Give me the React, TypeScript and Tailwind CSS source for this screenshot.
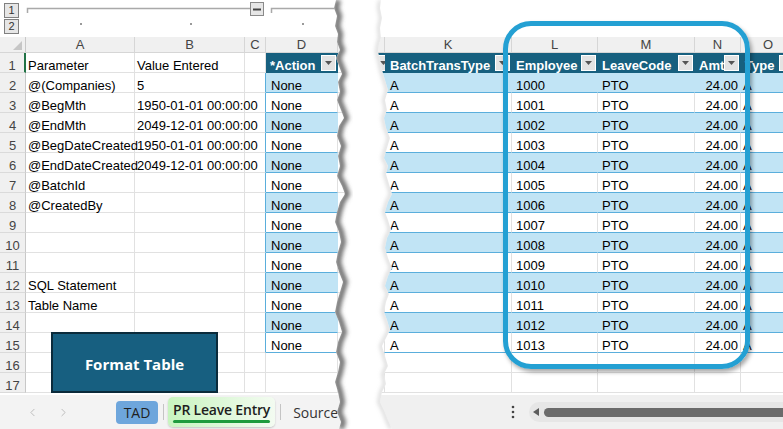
import React from 'react';
import { ChevronLeft, ChevronRight } from 'lucide-react';

const params = [
  'Parameter', '@(Companies)', '@BegMth', '@EndMth', '@BegDateCreated', '@EndDateCreated',
  '@BatchId', '@CreatedBy', '', '', '', 'SQL Statement', 'Table Name', '', '', '', '',
];
const values = [
  'Value Entered', '5', '1950-01-01 00:00:00', '2049-12-01 00:00:00', '1950-01-01 00:00:00',
  '2049-12-01 00:00:00', '', '', '', '', '', '', '', '', '', '', '',
];
const rows = Array.from({ length: 17 }, (_, i) => i + 1);

function FilterBtn() {
  return (
    <span className="mr-[2px] ml-auto flex h-[16px] w-[15px] shrink-0 items-center justify-center self-center border border-white bg-[#e3e3e3]">
      <svg width="7" height="4" viewBox="0 0 7 4">
        <polygon points="0,0 7,0 3.5,4" fill="#555" />
      </svg>
    </span>
  );
}

function Cell({ className = '', children }: { className?: string; children?: React.ReactNode }) {
  return (
    <div className={`flex h-full shrink-0 items-end whitespace-nowrap border-r border-b leading-[13px] ${className}`}>
      {children}
    </div>
  );
}

function HeadCell({ className = '', children }: { className?: string; children?: React.ReactNode }) {
  return (
    <div className={`flex h-full shrink-0 items-end whitespace-nowrap bg-[#17607f] pb-[1px] pl-[4px] font-bold leading-[13px] text-white ${className}`}>
      {children}
      <FilterBtn />
    </div>
  );
}

function Letter({ className = '', children }: { className?: string; children?: React.ReactNode }) {
  return (
    <div className={`flex h-full shrink-0 items-center justify-center border-r border-r-[#d6d6d6] text-[#444] ${className}`}>
      {children}
    </div>
  );
}

function LeftRow({ r }: { r: number }) {
  const inTable = r >= 2 && r <= 15;
  const stripe = inTable && r % 2 === 0;
  return (
    <div className="flex h-[20px] shrink-0">
      <div
        className={`flex w-[26px] shrink-0 items-end justify-center border-b border-b-[#dadada] bg-[#f0f0f0] leading-[13px] text-[#444] ${
          r === 1 ? 'border-r-2 border-r-[#217346]' : 'border-r border-r-[#c8c8c8]'
        }`}
      >
        {r}
      </div>
      <Cell className="w-[109px] border-r-[#e1e1e1] border-b-[#e1e1e1] pl-[2px]">{params[r - 1]}</Cell>
      <Cell className="w-[110px] border-r-[#e1e1e1] border-b-[#e1e1e1] pl-[2px]">{values[r - 1]}</Cell>
      <Cell className={`w-[21px] border-b-[#e1e1e1] ${inTable ? 'border-r-[#5aaedc]' : 'border-r-[#e1e1e1]'}`} />
      {r === 1 ? (
        <HeadCell className="w-[72px]">*Action</HeadCell>
      ) : inTable ? (
        <Cell
          className={`w-[72px] border-b-[#5aaedc] pl-[5px] ${
            stripe ? 'border-r-[#c1e4f5] bg-[#c1e4f5]' : 'border-r-[#e1e1e1] bg-white'
          }`}
        >
          None
        </Cell>
      ) : (
        <Cell className="w-[72px] border-r-[#e1e1e1] border-b-[#e1e1e1]" />
      )}
      <Cell className="w-[7px] border-r-[#e1e1e1] border-b-[#e1e1e1]" />
    </div>
  );
}

function RightRow({ r }: { r: number }) {
  const inTable = r >= 2 && r <= 15;
  const stripe = inTable && r % 2 === 0;
  if (r === 1) {
    return (
      <div className="flex h-[20px] shrink-0">
        <HeadCell className="w-[13px] pl-0" />
        <HeadCell className="w-[127px] pl-[5px]">BatchTransType</HeadCell>
        <HeadCell className="w-[86px] pl-[3px]">Employee</HeadCell>
        <HeadCell className="w-[97px]">LeaveCode</HeadCell>
        <HeadCell className="w-[46px] pl-[3px]">Amt</HeadCell>
        <HeadCell className="w-[55px] pl-[3px]">Type</HeadCell>
      </div>
    );
  }
  if (!inTable) {
    const g = 'border-r-[#e1e1e1] border-b-[#e1e1e1]';
    return (
      <div className="flex h-[20px] shrink-0">
        <Cell className={`w-[13px] ${g}`} />
        <Cell className={`w-[127px] ${g}`} />
        <Cell className={`w-[86px] ${g}`} />
        <Cell className={`w-[97px] ${g}`} />
        <Cell className={`w-[46px] ${g}`} />
        <Cell className={`w-[55px] ${g}`} />
      </div>
    );
  }
  const t = `border-b-[#5aaedc] ${stripe ? 'border-r-[#c1e4f5] bg-[#c1e4f5]' : 'border-r-[#e1e1e1] bg-white'}`;
  return (
    <div className="flex h-[20px] shrink-0">
      <Cell className={`w-[13px] ${t}`} />
      <Cell className={`w-[127px] pl-[5px] ${t}`}>A</Cell>
      <Cell className={`w-[86px] pl-[4px] ${t}`}>{1000 + r - 2}</Cell>
      <Cell className={`w-[97px] pl-[4px] ${t}`}>PTO</Cell>
      <Cell className={`w-[46px] justify-end pr-[2px] ${t}`}>24.00</Cell>
      <Cell className={`w-[55px] pl-[2px] ${t}`}>A</Cell>
    </div>
  );
}

function LeftPane() {
  return (
    <div className="flex w-[345px] shrink-0 flex-col overflow-hidden">
      <div className="flex h-[37px] shrink-0">
        <div className="ml-[4px] mt-[3px] flex flex-col gap-[1px] text-[11px] leading-none text-[#333]">
          <span className="flex h-[15px] w-[15px] items-center justify-center border border-[#808080] bg-[#e6e6e6]">1</span>
          <span className="flex h-[15px] w-[15px] items-center justify-center border border-[#808080] bg-[#e6e6e6]">2</span>
        </div>
        <svg className="ml-[7px] shrink-0" width="319" height="37" viewBox="26 0 319 37">
          <path d="M27.5 13 V8.5 H250" stroke="#a9a9a9" strokeWidth="1.5" fill="none" />
          <rect x="250.5" y="2.5" width="13" height="13" fill="#e6e6e6" stroke="#8a8a8a" />
          <path d="M253 9.5 H261" stroke="#444" strokeWidth="2" />
          <path d="M271.5 13 V8.5 H345" stroke="#a9a9a9" strokeWidth="1.5" fill="none" />
          <rect x="80" y="23" width="2" height="2" fill="#9a9a9a" />
          <rect x="190" y="23" width="2" height="2" fill="#9a9a9a" />
          <rect x="302" y="23" width="2" height="2" fill="#9a9a9a" />
        </svg>
      </div>
      <div className="flex h-[16px] shrink-0 border-b border-b-[#d6d6d6] bg-[#f0f0f0]">
        <div className="flex h-full w-[26px] shrink-0 items-end justify-end border-r border-r-[#c8c8c8] pr-[3px] pb-[2px]">
          <svg width="9" height="9" viewBox="0 0 9 9">
            <polygon points="9,0 9,9 0,9" fill="#c6c6c6" />
          </svg>
        </div>
        <Letter className="w-[109px]">A</Letter>
        <Letter className="w-[110px]">B</Letter>
        <Letter className="w-[21px]">C</Letter>
        <Letter className="w-[72px]">D</Letter>
        <Letter className="w-[7px]" />
      </div>
      {rows.map((r) => (
        <LeftRow key={r} r={r} />
      ))}
      <div className="mt-[2px] flex h-[34px] shrink-0 items-center bg-[#f3f3f3] font-['Open_Sans',sans-serif] text-[14px]">
        <ChevronLeft className="ml-[26px] h-[13px] w-[13px] shrink-0 text-[#b0b0b0]" strokeWidth={1.5} />
        <ChevronRight className="ml-[18px] h-[13px] w-[13px] shrink-0 text-[#b0b0b0]" strokeWidth={1.5} />
        <div className="ml-[46px] flex h-[23px] w-[42px] shrink-0 items-center justify-center rounded-[4px] bg-[#6ea6dc] text-[#1f1f1f]">
          TAD
        </div>
        <div className="ml-[5px] h-[16px] w-px shrink-0 bg-[#c4c4c4]" />
        <div className="ml-[4px] flex h-[30px] shrink-0 flex-col items-stretch justify-center rounded-[5px] bg-linear-to-r from-[#c8f4bf] to-[#f3fbf1] px-[5px] shadow-[0_1px_2px_rgba(0,0,0,0.2)]">
          <span className="font-semibold leading-[18px] tracking-[-0.2px] text-[#1e1e1e]">PR Leave Entry</span>
          <span className="mt-[1px] h-[3px] rounded-full bg-[#1e9b3d]" />
        </div>
        <div className="ml-[5px] h-[16px] w-px shrink-0 bg-[#c4c4c4]" />
        <span className="ml-[12px] whitespace-nowrap text-[#333]">Source Data</span>
      </div>
    </div>
  );
}

function RightPane() {
  return (
    <div className="ml-[27px] flex w-[411px] shrink-0 flex-col overflow-hidden">
      <div className="h-[37px] shrink-0" />
      <div className="flex h-[16px] shrink-0 border-b border-b-[#d6d6d6] bg-[#f0f0f0]">
        <Letter className="w-[13px]" />
        <Letter className="w-[127px]">K</Letter>
        <Letter className="w-[86px]">L</Letter>
        <Letter className="w-[97px]">M</Letter>
        <Letter className="w-[46px]">N</Letter>
        <Letter className="w-[55px]">O</Letter>
      </div>
      {rows.map((r) => (
        <RightRow key={r} r={r} />
      ))}
      <div className="mt-[2px] flex h-[34px] shrink-0 items-center bg-[#f0f0f0]">
        <svg className="ml-[139px] shrink-0" width="4" height="14" viewBox="0 0 4 14">
          <circle cx="2" cy="2" r="1.3" fill="#444" />
          <circle cx="2" cy="7" r="1.3" fill="#444" />
          <circle cx="2" cy="12" r="1.3" fill="#444" />
        </svg>
        <div className="ml-[14px] flex h-[20px] flex-1 items-center rounded-l-full bg-[#e6e6e6] pl-[4px]">
          <svg className="shrink-0" width="6" height="8" viewBox="0 0 6 8">
            <polygon points="6,0 6,8 0,4" fill="#5c5c5c" />
          </svg>
          <div className="ml-[5px] h-[9px] flex-1 rounded-l-full bg-[#6b6b6b]" />
        </div>
      </div>
    </div>
  );
}

const leftEdge: [number, number][] = [
  [336, 0], [334, 8], [337, 16], [335, 26], [338, 34], [337, 42], [340, 50], [336, 58], [339, 66],
  [342, 74], [338, 82], [340, 92], [337, 100], [341, 110], [344, 118], [339, 126], [337, 136],
  [341, 146], [338, 156], [340, 166], [337, 176], [342, 186], [345, 194], [340, 202], [337, 212],
  [335, 222], [339, 232], [341, 242], [338, 252], [336, 262], [339, 272], [343, 282], [340, 292],
  [337, 302], [335, 312], [339, 322], [342, 332], [338, 342], [336, 352], [340, 362], [338, 372],
  [335, 382], [338, 392], [340, 402], [337, 412], [341, 422], [339, 429],
];
const rightEdge: [number, number][] = [
  [392, 429], [388, 420], [384, 410], [380, 402], [382, 392], [386, 384], [384, 374], [388, 366],
  [385, 356], [382, 346], [386, 338], [390, 330], [387, 320], [384, 312], [386, 302], [389, 294],
  [385, 286], [388, 276], [392, 268], [388, 258], [385, 248], [387, 238], [391, 230], [388, 220],
  [385, 212], [388, 202], [392, 194], [389, 184], [386, 174], [388, 166], [384, 158], [387, 148],
  [390, 138], [386, 128], [384, 118], [387, 110], [385, 100], [388, 90], [385, 80], [382, 70],
  [380, 60], [378, 52], [379, 44], [381, 38], [380, 28], [382, 18], [380, 8], [381, 0],
];
const pts = (p: [number, number][], dx = 0) => p.map(([x, y]) => `${x + dx},${y}`).join(' ');

function Tear() {
  return (
    <svg className="absolute top-0 left-[320px]" width="80" height="429" viewBox="320 0 80 429">
      <defs>
        <clipPath id="tearClip">
          <polygon points={`${pts(leftEdge)} ${pts(rightEdge)}`} />
        </clipPath>
        <filter id="tearBlur" x="-50%" y="-5%" width="200%" height="110%">
          <feGaussianBlur stdDeviation="2" />
        </filter>
      </defs>
      <polygon points={`${pts(leftEdge)} ${pts(rightEdge)}`} fill="#fff" />
      <g clipPath="url(#tearClip)">
        <polyline points={pts(leftEdge, 2)} fill="none" stroke="#6f6f6f" strokeWidth="6" filter="url(#tearBlur)" />
        <polyline points={pts(rightEdge, -1)} fill="none" stroke="#bdbdbd" strokeWidth="2" filter="url(#tearBlur)" />
      </g>
    </svg>
  );
}

export default function App() {
  return (
    <div className="relative flex h-[429px] w-[783px] overflow-hidden bg-white font-['Liberation_Sans',Arial,sans-serif] text-[13px] text-black">
      <LeftPane />
      <RightPane />
      <Tear />
      <div className="absolute top-[21px] left-[503px] h-[348px] w-[247px] rounded-[28px] border-[5px] border-[#24a0d3] shadow-[2px_3px_4px_rgba(0,0,0,0.35)]" />
      <div className="absolute top-[332px] left-[51px] flex h-[61px] w-[167px] items-center justify-center border-2 border-[#0b2b3b] bg-[#175f80] pt-[4px] font-['Open_Sans',sans-serif] text-[15px] font-bold text-white">
        Format Table
      </div>
    </div>
  );
}
